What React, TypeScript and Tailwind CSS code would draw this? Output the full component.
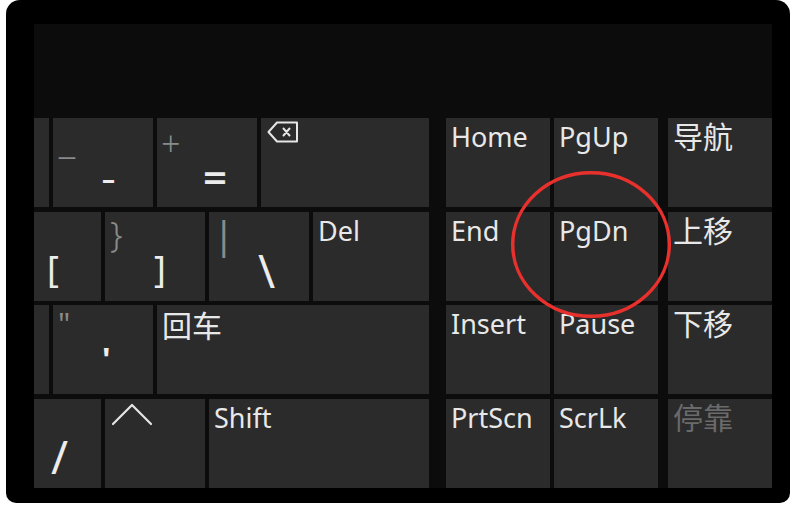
import React from "react";

const KEY = "bg-[#2b2b2b] h-full shrink-0";
const LABEL = "text-[27px] leading-none text-[#e8e8e8] pl-[5px] pt-[5px] whitespace-nowrap";
const CJK = "font-['Noto_Sans_CJK_SC',sans-serif] text-[30px] leading-none pl-[5px] pt-[2px] whitespace-nowrap";
const SEC = "[grid-area:1/1] self-start justify-self-start leading-none text-[#8a8a8a]";
const PRI = "[grid-area:1/1] self-start justify-self-start leading-none text-[#ececec]";

function TextKey({ label, w = "w-[104px]", extra = "" }: { label: string; w?: string; extra?: string }) {
  return (
    <div className={`${KEY} ${w} ${extra}`}>
      <div className={LABEL}>{label}</div>
    </div>
  );
}

function CjkKey({ label, dim = false, extra = "" }: { label: string; dim?: boolean; extra?: string }) {
  return (
    <div className={`${KEY} w-[104px] ${extra}`}>
      <div className={`${CJK} ${dim ? "text-[#6a6a6a]" : "text-[#e8e8e8]"}`}>{label}</div>
    </div>
  );
}

function BackspaceIcon() {
  return (
    <svg width="32" height="22" viewBox="0 0 32 22" fill="none" stroke="#e6e6e6" strokeWidth="2" strokeLinejoin="round">
      <path d="M10 1.5 H30 V20.5 H10 L1.5 11 Z" />
      <path d="M16.5 7.5 L22.5 14.5 M22.5 7.5 L16.5 14.5" strokeLinecap="round" />
    </svg>
  );
}

function Chevron() {
  return (
    <svg width="42" height="24" viewBox="0 0 42 24" fill="none" stroke="#e6e6e6" strokeWidth="2.2" strokeLinecap="round" strokeLinejoin="round">
      <path d="M2 22 L21 3 L40 22" />
    </svg>
  );
}

export default function App() {
  return (
    <div className="relative w-[794px] h-[506px] bg-white overflow-hidden font-['Noto_Sans',sans-serif]">
      <div className="ml-[6px] w-[784px] h-[503px] bg-black rounded-t-[14px] rounded-b-[10px] pl-[28px] pt-[24px] pr-[18px] pb-[15px]">
        <div className="w-full h-full bg-[#0c0c0c] flex flex-col">
          <div className="h-[94px] shrink-0" />
          <div className="flex-1 flex gap-[17px]">
            {/* main block */}
            <div className="w-[395px] grid grid-rows-4 gap-y-[4.67px]">
              <div className="flex gap-[4px]">
                <div className={`${KEY} w-[15px]`} />
                <div className={`${KEY} w-[100px] grid`}>
                  <span className={`${SEC} text-[18px] font-semibold ml-[5px] mt-[29px]`}>—</span>
                  <span className={`${PRI} text-[26px] font-bold ml-[49px] mt-[48px]`}>–</span>
                </div>
                <div className={`${KEY} w-[100px] grid`}>
                  <span className={`${SEC} text-[34px] font-light ml-[4px] mt-[8px]`}>+</span>
                  <span className={`${PRI} text-[42px] font-semibold ml-[46px] mt-[38px]`}>=</span>
                </div>
                <div className={`${KEY} w-[168px] pl-[6px] pt-[3px]`}>
                  <BackspaceIcon />
                </div>
              </div>
              <div className="flex gap-[4px]">
                <div className={`${KEY} w-[67px] grid`}>
                  <span className={`${PRI} text-[36px] ml-[13px] mt-[39px]`}>[</span>
                </div>
                <div className={`${KEY} w-[100px] grid`}>
                  <span className={`${SEC} text-[35px] font-light ml-[5px] mt-[4px]`}>{"}"}</span>
                  <span className={`${PRI} text-[36px] ml-[49px] mt-[39px]`}>]</span>
                </div>
                <div className={`${KEY} w-[100px] grid`}>
                  <span className={`${SEC} text-[39px] ml-[4px] mt-[2px]`}>|</span>
                  <span className={`${PRI} text-[46px] ml-[49px] mt-[35px]`}>\</span>
                </div>
                <TextKey label="Del" w="w-[116px]" />
              </div>
              <div className="flex gap-[4px]">
                <div className={`${KEY} w-[15px]`} />
                <div className={`${KEY} w-[100px] grid`}>
                  <span className={`${SEC} text-[30px] ml-[5px] mt-[4px]`}>"</span>
                  <span className={`${PRI} text-[32px] font-bold ml-[49px] mt-[38px]`}>'</span>
                </div>
                <div className={`${KEY} w-[272px]`}>
                  <div className={`${CJK} text-[#e8e8e8] pt-[4px]`}>回车</div>
                </div>
              </div>
              <div className="flex gap-[4px]">
                <div className={`${KEY} w-[67px] grid`}>
                  <span className={`${PRI} text-[46px] ml-[17px] mt-[34px]`}>/</span>
                </div>
                <div className={`${KEY} w-[100px] pl-[6px] pt-[3px]`}>
                  <Chevron />
                </div>
                <TextKey label="Shift" w="w-[220px]" />
              </div>
            </div>

            {/* navigation block */}
            <div className="w-[326px] grid grid-rows-4 gap-y-[4.67px]">
              <div className="flex">
                <TextKey label="Home" />
                <TextKey label="PgUp" extra="ml-[4px]" />
                <CjkKey label="导航" extra="ml-[10px]" />
              </div>
              <div className="flex">
                <TextKey label="End" />
                <TextKey label="PgDn" extra="ml-[4px]" />
                <CjkKey label="上移" extra="ml-[10px]" />
              </div>
              <div className="flex">
                <TextKey label="Insert" />
                <TextKey label="Pause" extra="ml-[4px]" />
                <CjkKey label="下移" extra="ml-[10px]" />
              </div>
              <div className="flex">
                <TextKey label="PrtScn" />
                <TextKey label="ScrLk" extra="ml-[4px]" />
                <CjkKey label="停靠" dim extra="ml-[10px]" />
              </div>
            </div>
          </div>
        </div>
      </div>

      {/* red highlight ring */}
      <svg className="absolute left-[509px] top-[169px]" width="164" height="151" viewBox="0 0 164 151" fill="none">
        <ellipse cx="82" cy="75.5" rx="78.3" ry="71.8" stroke="#e8302c" strokeWidth="3.5" />
      </svg>
    </div>
  );
}
